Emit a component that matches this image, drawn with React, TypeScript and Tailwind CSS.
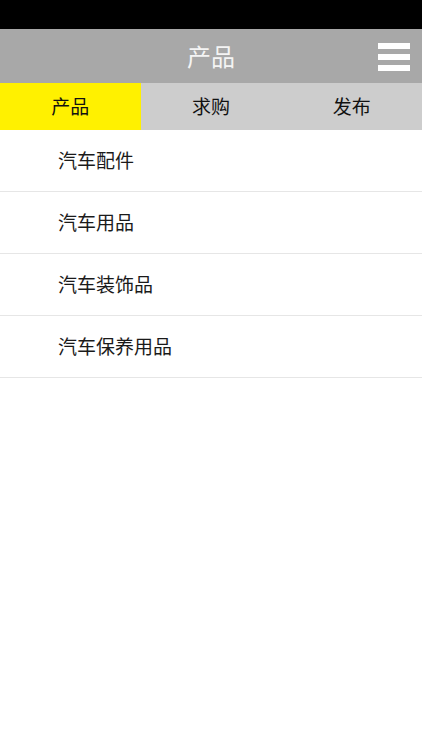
import React from "react";

const font = { fontFamily: '"Noto Sans CJK SC", "Noto Sans", sans-serif' };

export default function App() {
  const items = ["汽车配件", "汽车用品", "汽车装饰品", "汽车保养用品"];
  return (
    <div className="w-[422px] h-[750px] bg-white" style={font}>
      <div className="h-[29px] bg-black" />
      <div className="relative h-[54px] bg-[#a8a8a8] flex items-center justify-center">
        <span className="text-[24px] text-[#f4f4f4] leading-none">产品</span>
        <div className="absolute right-[12px] top-[14px] flex flex-col gap-[5px]">
          <div className="w-[32px] h-[6px] bg-white" />
          <div className="w-[32px] h-[6px] bg-white" />
          <div className="w-[32px] h-[6px] bg-white" />
        </div>
      </div>
      <div className="h-[47px] grid grid-cols-3 bg-[#cdcdcd]">
        <div className="bg-[#fff100] flex items-center justify-center text-[19px] text-[#111]">产品</div>
        <div className="flex items-center justify-center text-[19px] text-[#111]">求购</div>
        <div className="flex items-center justify-center text-[19px] text-[#111]">发布</div>
      </div>
      <div>
        {items.map((t) => (
          <div
            key={t}
            className="h-[62px] border-b-[1.5px] border-[#e6e6e6] flex items-center pl-[58px] text-[19px] text-[#1a1a1a]"
          >
            {t}
          </div>
        ))}
      </div>
    </div>
  );
}
